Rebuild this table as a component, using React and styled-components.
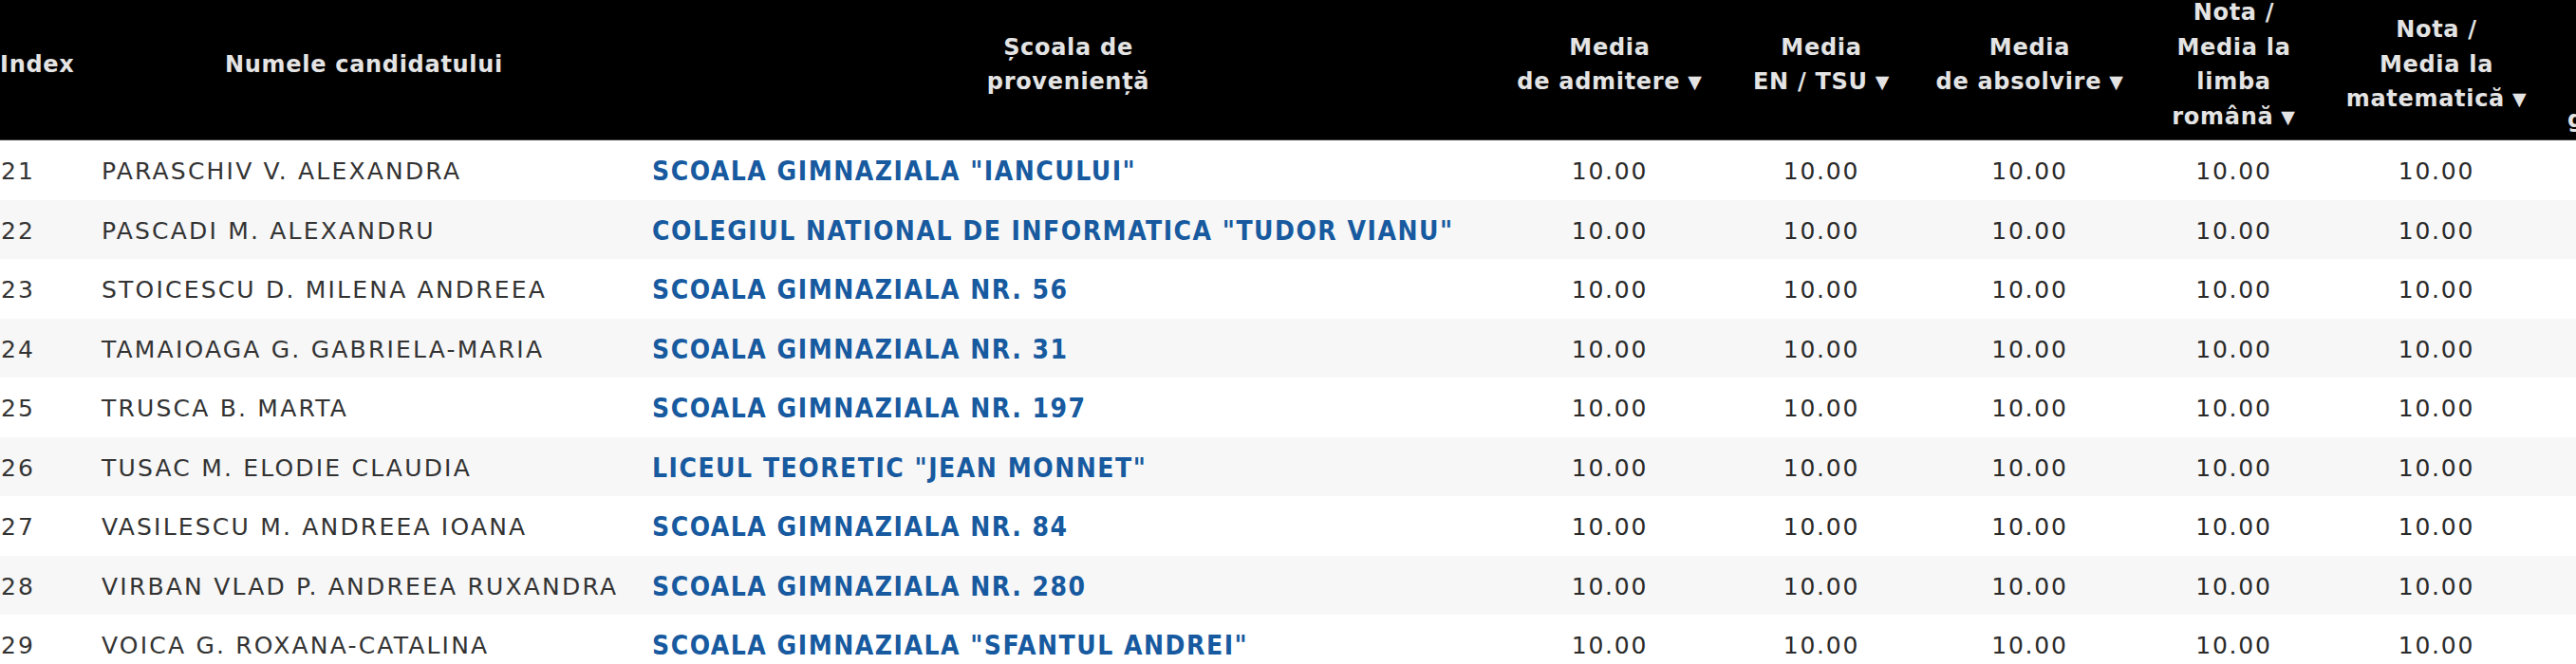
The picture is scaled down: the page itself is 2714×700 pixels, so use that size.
import styled, { createGlobalStyle } from 'styled-components';

const GlobalStyle = createGlobalStyle`
  html, body {
    margin: 0;
    padding: 0;
    background: #fff;
    overflow: hidden;
  }
`;

const COLUMNS = '100px 567px 917px 224px 222px 217px 213px 214px 1fr';

const Wrapper = styled.div`
  width: 2714px;
  height: 700px;
  overflow: hidden;
  background: #fff;
`;

const HeadRow = styled.div`
  display: grid;
  grid-template-columns: ${COLUMNS};
  grid-template-rows: 147px;
  height: 147px;
  background-color: #000;
  border-bottom: 1px solid #3c3c3c;
  color: #e4e4e4;
  font-family: 'DejaVu Sans', Verdana, sans-serif;
  font-weight: bold;
  font-size: 24px;
  letter-spacing: 0.7px;
  line-height: 36.5px;
  overflow: hidden;
`;

const HeadCell = styled.div`
  display: flex;
  flex-direction: column;
  justify-content: ${(p) => (p.$bottom ? 'flex-end' : 'center')};
  align-items: ${(p) => (p.$left ? 'flex-start' : 'center')};
  text-align: ${(p) => (p.$left ? 'left' : 'center')};
  padding-bottom: ${(p) => (p.$bottom ? '3px' : '11px')};
  padding-left: ${(p) => p.$indent || 0}px;
  min-height: 0;
  white-space: nowrap;
  box-sizing: border-box;
`;

const Arrow = styled.span`
  font-size: 19px;
  margin-left: 8px;
  vertical-align: 1px;
`;

const HeadLink = styled.span`
  text-decoration: underline;
`;

const Body = styled.div`
  display: flex;
  flex-direction: column;
`;

const Row = styled.div`
  display: grid;
  grid-template-columns: ${COLUMNS};
  height: 62.5px;
  align-items: center;
  font-family: 'DejaVu Sans', Verdana, sans-serif;
  font-size: 25px;
  letter-spacing: 2.2px;
  color: #333;
  white-space: nowrap;

  &:nth-child(even) {
    background-color: #f7f7f7;
  }
`;

const IndexCell = styled.div`
  padding-left: 1px;
  padding-top: 3px;
`;

const NameCell = styled.div`
  padding-left: 7px;
  padding-top: 3px;
`;

const SchoolCell = styled.div`
  padding-left: 20px;
  padding-top: 3px;
`;

const SchoolLink = styled.a`
  color: #175a9f;
  font-family: 'DejaVu Sans Condensed', 'DejaVu Sans', Tahoma, sans-serif;
  font-weight: bold;
  font-size: 28px;
  letter-spacing: 1.5px;
  text-decoration: none;
`;

const Score = styled.div`
  text-align: center;
  padding-top: 3px;
  color: #2a2a2a;
  letter-spacing: 1.8px;
`;

const rows = [
  [21, 'PARASCHIV V. ALEXANDRA', 'SCOALA GIMNAZIALA "IANCULUI"'],
  [22, 'PASCADI M. ALEXANDRU', 'COLEGIUL NATIONAL DE INFORMATICA "TUDOR VIANU"'],
  [23, 'STOICESCU D. MILENA ANDREEA', 'SCOALA GIMNAZIALA NR. 56'],
  [24, 'TAMAIOAGA G. GABRIELA-MARIA', 'SCOALA GIMNAZIALA NR. 31'],
  [25, 'TRUSCA B. MARTA', 'SCOALA GIMNAZIALA NR. 197'],
  [26, 'TUSAC M. ELODIE CLAUDIA', 'LICEUL TEORETIC "JEAN MONNET"'],
  [27, 'VASILESCU M. ANDREEA IOANA', 'SCOALA GIMNAZIALA NR. 84'],
  [28, 'VIRBAN VLAD P. ANDREEA RUXANDRA', 'SCOALA GIMNAZIALA NR. 280'],
  [29, 'VOICA G. ROXANA-CATALINA', 'SCOALA GIMNAZIALA "SFANTUL ANDREI"'],
];

function App() {
  return (
    <Wrapper>
      <GlobalStyle />
      <HeadRow>
        <HeadCell $left>Index</HeadCell>
        <HeadCell>Numele candidatului</HeadCell>
        <HeadCell>
          <span>Școala de</span>
          <span>proveniență</span>
        </HeadCell>
        <HeadCell>
          <span>Media</span>
          <span>de admitere<Arrow>▼</Arrow></span>
        </HeadCell>
        <HeadCell>
          <span>Media</span>
          <span>EN / TSU<Arrow>▼</Arrow></span>
        </HeadCell>
        <HeadCell>
          <span>Media</span>
          <span>de absolvire<Arrow>▼</Arrow></span>
        </HeadCell>
        <HeadCell>
          <span>Nota /</span>
          <span>Media la</span>
          <span>limba</span>
          <span>română<Arrow>▼</Arrow></span>
        </HeadCell>
        <HeadCell>
          <span>Nota /</span>
          <span>Media la</span>
          <span>matematică<Arrow>▼</Arrow></span>
        </HeadCell>
        <HeadCell $left $bottom $indent={31}>
          <HeadLink>g</HeadLink>
        </HeadCell>
      </HeadRow>
      <Body>
        {rows.map(([idx, name, school]) => (
          <Row key={idx}>
            <IndexCell>{idx}</IndexCell>
            <NameCell>{name}</NameCell>
            <SchoolCell>
              <SchoolLink href="#">{school}</SchoolLink>
            </SchoolCell>
            <Score>10.00</Score>
            <Score>10.00</Score>
            <Score>10.00</Score>
            <Score>10.00</Score>
            <Score>10.00</Score>
            <div />
          </Row>
        ))}
      </Body>
    </Wrapper>
  );
}

export default App;
